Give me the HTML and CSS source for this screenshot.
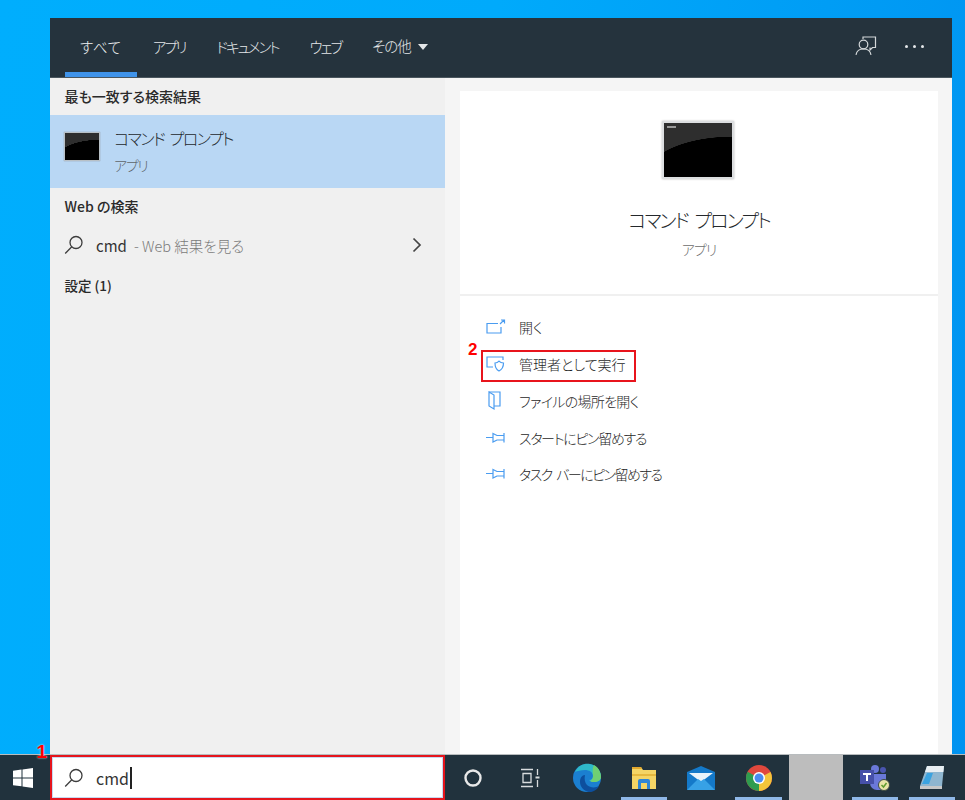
FILE: index.html
```html
<!DOCTYPE html>
<html lang="ja">
<head>
<meta charset="utf-8">
<title>cmd</title>
<link rel="stylesheet" href="styles.css">
</head>
<body>
<div class="desktop">
  <main class="panel">
    <header class="tabs">
      <nav class="tablist">
        <span class="tab tab-active">すべて</span>
        <span class="tab tab-kana">アプリ</span>
        <span class="tab tab-kana">ドキュメント</span>
        <span class="tab tab-kana">ウェブ</span>
        <span class="tab tab-more"><span class="more-label">その他</span><i class="caret"></i></span>
      </nav>
      <div class="tools">
        <svg class="tool-feedback" width="22" height="22" viewBox="0 0 22 22" fill="none" stroke="#d4d8da" stroke-width="1.2"><path d="M8 4V2h12.500v10.500h-3l-2.500 2.500v-2.500"/><circle cx="8.500" cy="9.500" r="4.300" fill="#25333d"/><path d="M1 19.800c.5-3.500 3.500-6 7.500-6s7 2.500 7.500 6"/></svg>
        <span class="dots"><i></i><i></i><i></i></span>
      </div>
    </header>
    <div class="body">
      <section class="left">
        <h2 class="group group-first">最も一致する検索結果</h2>
        <div class="best">
          <div class="term term-small"></div>
          <div class="best-text">
            <div class="best-name">コマンド プロンプト</div>
            <div class="best-kind">アプリ</div>
          </div>
        </div>
        <h2 class="group group-web">Web の検索</h2>
        <div class="web-row">
          <svg class="glass" width="20" height="20" viewBox="0 0 20 20" fill="none" stroke="#3c3c3c" stroke-width="1.300"><circle cx="12" cy="7.500" r="6"/><path d="M7.800 11.800L1.200 18.500"/></svg>
          <span class="web-cmd">cmd</span><span class="web-hint"> - Web 結果を見る</span>
          <svg class="chev" width="10" height="16" viewBox="0 0 10 16" fill="none" stroke="#444" stroke-width="1.700"><path d="M1.500 1.500L8 8l-6.500 6.500"/></svg>
        </div>
        <h2 class="group group-set">設定 (1)</h2>
      </section>
      <section class="right">
        <div class="card">
          <div class="hero">
            <div class="term term-large"></div>
            <div class="hero-name">コマンド プロンプト</div>
            <div class="hero-kind">アプリ</div>
          </div>
          <ul class="actions">
            <li class="action">
              <svg width="20" height="16" viewBox="0 0 20 16" fill="none" stroke="#4a9cf0" stroke-width="1.200"><path d="M12 4.500H1v9.500h14V8"/><path d="M14 5l4-4M15 1h3.500v3.500"/></svg>
              <span>開く</span>
            </li>
            <li class="action action-marked">
              <b class="num num-2">2</b>
              <svg width="20" height="16" viewBox="0 0 20 16" fill="none" stroke="#4a9cf0" stroke-width="1.200"><path d="M7 11H1V1h16v3"/><path d="M9 7c2 0 3-.7 4-1.800 1 1.100 2.500 1.800 4.500 1.800 0 4-1.500 6.500-4.500 8-3-1.500-4-4-4-8z" fill="#fff"/></svg>
              <span>管理者として実行</span>
            </li>
            <li class="action">
              <svg width="20" height="20" viewBox="0 0 20 20" fill="none" stroke="#4a9cf0" stroke-width="1.200"><path d="M3 1h11v14H8"/><path d="M3 1l5 3v14l-5-3zM3 1v14"/></svg>
              <span class="kana-mid">ファイルの場所を開く</span>
            </li>
            <li class="action">
              <svg width="20" height="16" viewBox="0 0 20 16" fill="none" stroke="#4a9cf0" stroke-width="1.200"><path d="M0 7.500h7M7 3.500l4 2h7v-2.500v9.500v-2.500h-7l-4 2z"/></svg>
              <span class="kana-tight">スタートにピン留めする</span>
            </li>
            <li class="action">
              <svg width="20" height="16" viewBox="0 0 20 16" fill="none" stroke="#4a9cf0" stroke-width="1.200"><path d="M0 7.500h7M7 3.500l4 2h7v-2.500v9.500v-2.500h-7l-4 2z"/></svg>
              <span class="kana-spaced">タスク バーにピン留めする</span>
            </li>
          </ul>
        </div>
      </section>
    </div>
  </main>
  <footer class="taskbar">
    <div class="start">
      <b class="num num-1">1</b>
      <svg width="20" height="20" viewBox="0 0 20 20" fill="#fff"><path d="M0 2.800L8.500 1.600v7.800H0zM9.500 1.500L20 0v9.400H9.500zM0 10.500h8.500v7.800L0 17.200zM9.500 10.500H20V20L9.500 18.500z"/></svg>
    </div>
    <div class="searchbox">
      <svg class="glass-box" width="20" height="20" viewBox="0 0 20 20" fill="none" stroke="#3c3c3c" stroke-width="1.300"><circle cx="12" cy="7.500" r="6"/><path d="M7.800 11.800L1.200 18.500"/></svg>
      <span class="typed">cmd</span><i class="cursor"></i>
    </div>
    <div class="tray">
      <div class="slot">
        <svg width="18" height="18" viewBox="0 0 18 18" fill="none" stroke="#e8e8e8" stroke-width="2.400"><circle cx="9" cy="9" r="7.500"/></svg>
      </div>
      <div class="slot">
        <svg width="20" height="20" viewBox="0 0 20 20" fill="none" stroke="#d8dcde" stroke-width="1.300"><path d="M1 1.500h12M1 18.500h12M3 5.500h8v9H3zM17.500 1v6M17.500 12v7"/><path d="M15.500 9.500h4" stroke-width="2"/></svg>
      </div>
      <div class="slot">
        <svg width="30" height="30" viewBox="0 0 30 30"><circle cx="15" cy="15" r="14" fill="#1b7fd0"/><path d="M3 9C6 2 13 0 18 1c6 1 11 6 11 13 0 3-3 5-7 5-2 0-4-1-5-2 3 0 4-2 4-4 0-4-4-6-8-6-4 0-8 1-10 2z" fill="#2fb9c9"/><path d="M22 2c4 2 7 7 7 12 0 3-3 5-7 5-1 0-3 0-4-1 2-1 3-3 3-5 0-4-1-8 1-11z" fill="#6fd072"/><path d="M13 12c-3 0-5 3-5 7 0 5 4 9 9 10 4 0 8-2 10-6-3 2-9 2-12-1-2-2-3-6-2-10z" fill="#0d4f9e"/></svg>
      </div>
      <div class="slot slot-on">
        <svg width="26" height="24" viewBox="0 0 26 24"><path d="M1 1h9l2 3h13v19H1z" fill="#f5d565"/><path d="M1 1h9l1 2H1z" fill="#e3a92f"/><path d="M1 8h24v2H1z" fill="#e6b83e"/><path d="M7 23v-8a2 2 0 0 1 2-2h8a2 2 0 0 1 2 2v8h-3v-6h-6v6z" fill="#2f86d6"/></svg>
      </div>
      <div class="slot">
        <svg width="28" height="24" viewBox="0 0 28 24"><path d="M0 6L14 0l14 6v18H0z" fill="#1479c9"/><path d="M2 7h24L14 16z" fill="#e9f4fb"/><path d="M0 24L11 13l3 2 3-2 11 11z" fill="#37a1e6"/></svg>
      </div>
      <div class="slot slot-on">
        <svg width="26" height="26" viewBox="0 0 26 26"><circle cx="13" cy="13" r="13" fill="#e0483d"/><path d="M13 13L24.500 7A13 13 0 0 1 13 26z" fill="#f3c53a"/><path d="M13 13L13 26A13 13 0 0 1 1.600 6.800z" fill="#2e9c4f"/><circle cx="13" cy="13" r="6" fill="#fff"/><circle cx="13" cy="13" r="4.500" fill="#4a8cf0"/></svg>
      </div>
      <div class="slot-blank"></div>
      <div class="slot slot-on">
        <svg width="30" height="28" viewBox="0 0 30 28"><circle cx="15" cy="5" r="4" fill="#6a78d8"/><circle cx="23" cy="6" r="3" fill="#4a55b0"/><path d="M10 10h16v10a6 6 0 0 1-6 6h-3a7 7 0 0 1-7-7z" fill="#6a78d8"/><path d="M0 6h14v14H0z" fill="#4650a8"/><path d="M3 9h8v2H8v6H6v-6H3z" fill="#fff"/><circle cx="24" cy="21" r="5.500" fill="#e8e4a8" stroke="#3c4a40"/><path d="M21.500 21l2 2 3-4" fill="none" stroke="#5f9c2f" stroke-width="1.500"/></svg>
      </div>
      <div class="slot slot-on">
        <svg width="26" height="26" viewBox="0 0 26 26"><path d="M8 1h17l-2 20H1z" fill="#8fb6d0"/><path d="M8 1h17l-.6 6H6z" fill="#e8eef2"/><path d="M1 21h22v3H1z" fill="#c8c8c8"/><path d="M3 19L8 8h6l-4 11z" fill="#3ba3e0"/></svg>
      </div>
    </div>
  </footer>
</div>
</body>
</html>
```
FILE: styles.css
```css
* { box-sizing: border-box; }
html, body { margin: 0; padding: 0; }
body {
  font-family: "Noto Sans CJK JP", "Noto Sans", sans-serif;
  font-feature-settings: "palt";
  color: #2b2b2b;
}
.desktop {
  width: 965px;
  height: 800px;
  overflow: hidden;
  padding-top: 18px;
  display: flex;
  flex-direction: column;
  background: linear-gradient(100deg, #00aefd 0%, #00aafb 45%, #0092f0 100%);
}
.panel {
  width: 902px;
  height: 736px;
  margin-left: 50px;
  display: flex;
  flex-direction: column;
  background: #f5f5f5;
}
.tabs {
  height: 60px;
  flex: none;
  background: #25333d;
  border-bottom: 1px solid #4a565e;
  display: flex;
  justify-content: space-between;
  align-items: stretch;
  color: #e4e7e9;
  font-size: 14.500px;
  font-weight: 300;
}
.tablist { display: flex; margin-left: 15px; }
.tab {
  padding: 0 15px;
  line-height: 57px;
  border-bottom: 5px solid transparent;
  height: 59px;
  margin-right: 1px;
}
.tab-active { color: #f2f4f5; border-bottom-color: #3f93ea; letter-spacing: .7px; }
.tab-kana { letter-spacing: -2px; }
.tab-more { display: flex; align-items: center; gap: 7px; line-height: 1; height: 57px; border-bottom: 0; }
.more-label { letter-spacing: -1px; }
.caret {
  width: 0;
  height: 0;
  border: 5.500px solid transparent;
  border-top: 6px solid #e4e7e9;
  border-bottom: 0;
}
.tools { display: flex; align-items: center; padding-right: 28px; gap: 28px; padding-bottom: 3px; }
.dots { display: flex; gap: 5px; }
.dots i { width: 3px; height: 3px; border-radius: 50%; background: #e4e7e9; }
.body { flex: 1; display: flex; min-height: 0; }
.left {
  width: 395px;
  flex: none;
  background: #f0f0f0;
  display: flex;
  flex-direction: column;
}
.group {
  margin: 0;
  padding-left: 14.500px;
  font-size: 14px;
  font-weight: 500;
  line-height: 20px;
  color: #2a2a2a;
}
.group-first { padding-top: 8px; height: 37px; }
.group-web { padding-top: 8px; height: 37px; }
.group-set { margin-top: 0; padding-top: 10px; font-size: 13.500px; }
.best {
  height: 73px;
  flex: none;
  background: #b9d7f4;
  display: flex;
  align-items: center;
  padding-left: 14px;
  gap: 14px;
}
.term {
  flex: none;
  background: radial-gradient(ellipse 128% 75% at 100% 100%, #000 99%, #2e2e2e 100%);
}
.term-small {
  width: 36px;
  height: 29px;
  margin-top: -10px;
  border: 1px solid #b8c0c6;
  box-shadow: 0 0 1px #8a8a8a;
}
.term-large {
  width: 72px;
  height: 58px;
  margin-right: 3px;
  border: 2px solid #dcdee0;
  box-shadow: 0 0 2px #bbb;
  background:
    linear-gradient(#999, #999) 3px 3px / 9px 2px no-repeat,
    radial-gradient(ellipse 128% 75% at 100% 100%, #000 99%, #2e2e2e 100%);
}
.best-text { display: flex; flex-direction: column; }
.best-name { font-size: 16px; line-height: 24px; font-weight: 300; letter-spacing: -1.500px; word-spacing: 3px; color: #24282c; margin-top: -3px; }
.best-kind { font-size: 14px; line-height: 20px; font-weight: 300; letter-spacing: -1.300px; color: #5f656a; margin-top: 5px; }
.web-row {
  height: 40px;
  flex: none;
  position: relative;
  display: flex;
  align-items: center;
  padding-left: 14px;
  font-size: 15px;
}
.glass { margin-right: 12px; }
.web-cmd { color: #333; }
.web-hint { color: #7a7a7a; font-size: 14.500px; font-weight: 300; margin-left: 4px; white-space: pre; }
.chev { position: absolute; left: 362px; top: 12px; }
.right { flex: 1; padding: 13px 14px 0 15px; }
.card { background: #fff; height: 100%; }
.hero {
  height: 205px;
  border-bottom: 2px solid #f0f0f0;
  display: flex;
  flex-direction: column;
  align-items: center;
  padding-top: 30px;
}
.hero-name { font-size: 19px; line-height: 28px; margin-top: 27px; font-weight: 300; letter-spacing: -1.800px; word-spacing: 4px; color: #24282c; }
.hero-kind { font-size: 14px; line-height: 20px; margin-top: 5px; font-weight: 300; letter-spacing: -1px; color: #6c6c6c; }
.actions {
  list-style: none;
  margin: 0;
  padding: 13px 0 0 26px;
  font-size: 14px;
  font-weight: 300;
  color: #1f1f1f;
}
.kana-mid { letter-spacing: -.7px; }
.kana-tight { letter-spacing: -1.300px; }
.kana-spaced { letter-spacing: -1.550px; word-spacing: 3px; }
.action { height: 36.750px; display: flex; align-items: center; gap: 13px; position: relative; }
.action svg { width: 20px; flex: none; }
.action-marked::before {
  content: "";
  position: absolute;
  left: -5px;
  top: 4.500px;
  width: 151px;
  height: 28px;
  border: 2px solid #e8141c;
}
.num {
  position: absolute;
  color: #f00;
  font: 700 17px/18px "Liberation Sans", sans-serif;
  text-shadow: 0 0 2px #fff;
}
.num-2 { left: -18px; top: -5px; }
.num-1 { right: 3px; top: -12px; font-size: 19px; }
.taskbar {
  height: 46px;
  flex: none;
  display: flex;
  background: #21323d;
  border-top: 1px solid #b8bcbe;
}
.start {
  width: 50px;
  position: relative;
  display: flex;
  align-items: center;
  justify-content: center;
  padding-right: 5px;
}
.searchbox {
  width: 395px;
  height: 45px;
  background: #fff;
  border: 2px solid #e5141c;
  outline: 1px solid #c8d8f0;
  outline-offset: -3px;
  display: flex;
  align-items: center;
  padding-left: 12px;
  font-size: 16px;
  color: #333;
}
.glass-box { margin-right: 12px; }
.typed { line-height: 1; }
.cursor { width: 2px; height: 22px; background: #222; margin-left: 1px; }
.tray { flex: 1; display: flex; align-items: stretch; margin-left: -1px; }
.slot {
  width: 57.200px;
  position: relative;
  display: flex;
  align-items: center;
  justify-content: center;
}
.slot-on::after {
  content: "";
  position: absolute;
  left: 5.500px;
  right: 5.500px;
  bottom: 0;
  height: 3px;
  background: #8fb8e8;
}
.slot-blank { width: 54px; background: #bdbdbd; margin-left: 2px; margin-right: 3px; }
```
